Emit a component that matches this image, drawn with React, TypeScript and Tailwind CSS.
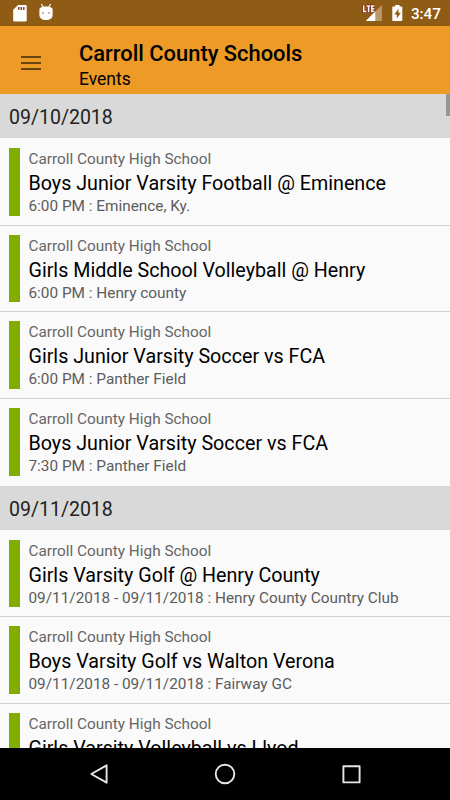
interface EventItem {
  title: string
  detail?: string
}

interface EventDay {
  date: string
  events: EventItem[]
}

const days: EventDay[] = [
  {
    date: '09/10/2018',
    events: [
      { title: 'Boys Junior Varsity Football @ Eminence', detail: '6:00 PM : Eminence, Ky.' },
      { title: 'Girls Middle School Volleyball @ Henry', detail: '6:00 PM : Henry county' },
      { title: 'Girls Junior Varsity Soccer vs FCA', detail: '6:00 PM : Panther Field' },
      { title: 'Boys Junior Varsity Soccer vs FCA', detail: '7:30 PM : Panther Field' },
    ],
  },
  {
    date: '09/11/2018',
    events: [
      { title: 'Girls Varsity Golf @ Henry County', detail: '09/11/2018 - 09/11/2018 : Henry County Country Club' },
      { title: 'Boys Varsity Golf vs Walton Verona', detail: '09/11/2018 - 09/11/2018 : Fairway GC' },
      { title: 'Girls Varsity Volleyball vs Llyod' },
    ],
  },
]

function StatusBar() {
  return (
    <div className="flex h-[26px] shrink-0 items-center justify-between bg-[#8f5c16] pr-[9px] pl-[13px]">
      <div className="flex items-center">
        {/* SD card */}
        <svg className="h-[26px] w-[15px]" viewBox="0 0 15 26">
          <path d="M5 5h7.5a1.2 1.2 0 0 1 1.2 1.2v14a1.2 1.2 0 0 1-1.2 1.2H1.4a1.2 1.2 0 0 1-1.2-1.2V9.8z" fill="#fff" />
          <path d="M5.8 7v3M8.3 7v3M10.8 7v3" stroke="#8a3a20" strokeWidth="1.4" />
        </svg>
        {/* Android head */}
        <svg className="ml-[11px] h-[26px] w-[14px]" viewBox="0 0 14 26">
          <path d="M2.4 4l2 3.4M11.6 4l-2 3.4" stroke="#fff" strokeWidth="1.1" />
          <path d="M.4 9.5C.4 7.4 3 6.4 7 6.4s6.6 1 6.6 3.1V15c0 3-2.6 5-6.6 5S.4 18 .4 15z" fill="#fff" />
          <circle cx="3.9" cy="13" r=".8" fill="#8f5c16" />
          <circle cx="10" cy="13" r=".8" fill="#8f5c16" />
        </svg>
      </div>
      <div className="flex items-center">
        {/* LTE signal */}
        <svg className="h-[26px] w-[21px]" viewBox="0 0 21 26">
          <path d="M20.8 5v16H4.8z" fill="#b99a6c" />
          <path d="M14.3 11.5V21H4.8z" fill="#fff" />
          <path d="M2.7 5.5v6h2.6M5.9 6h3.4M7.6 6v6M13.3 6h-2.5v5.500h2.500M10.800 8.700h2.300" fill="none" stroke="#7d2020" strokeWidth="2.8" />
          <path d="M2.7 5.5v6h2.6M5.9 6h3.4M7.6 6v6M13.3 6h-2.5v5.500h2.500M10.800 8.700h2.300" fill="none" stroke="#fff" strokeWidth="1.5" />
        </svg>
        {/* Charging battery */}
        <svg className="ml-[10px] h-[26px] w-[11px]" viewBox="0 0 11 26">
          <path d="M3.2 5h4.4v1.4h1.7c.6 0 1 .4 1 1V20c0 .6-.4 1-1 1H1.3c-.6 0-1-.4-1-1V7.4c0-.6.4-1 1-1h1.9z" fill="#fff" />
          <path d="M6.5 8.7L2.3 14.4h2.5v4.2l4.1-5.9H6.5z" fill="#8f5c16" />
        </svg>
        <span className="ml-[8px] pt-px text-[15.3px] leading-[26px] font-medium text-white">3:47</span>
      </div>
    </div>
  )
}

function AppBar() {
  return (
    <header className="flex h-[68px] shrink-0 bg-[#ed9b26]">
      <button type="button" aria-label="Menu" className="mt-[30px] ml-[20.5px] flex h-[14px] w-[20.5px] flex-col justify-between">
        <span className="h-[2px] w-full bg-[#684413]" />
        <span className="h-[2px] w-full bg-[#684413]" />
        <span className="h-[2px] w-full bg-[#684413]" />
      </button>
      <div className="ml-[38px] pt-[14px] text-black">
        <h1 className="text-[21.9px] leading-[27px] font-medium">Carroll County Schools</h1>
        <p className="text-[17.5px] leading-[25px]">Events</p>
      </div>
    </header>
  )
}

function EventRow({ title, detail }: EventItem) {
  return (
    <li className="flex h-[86.6px] border-b border-[#d2d2d2] pt-[9px] pl-[9px] last:border-b-0">
      <span className="h-[67.6px] w-[11px] shrink-0 bg-[#80ad00]" />
      <div className="ml-[8.5px] whitespace-nowrap">
        <p className="text-[15.35px] leading-[22px] text-[#666666]">Carroll County High School</p>
        <p className="text-[19.7px] leading-[27px] text-black">{title}</p>
        {detail && <p className="text-[15.35px] leading-[19px] text-[#5c5c5c]">{detail}</p>}
      </div>
    </li>
  )
}

function NavBar() {
  return (
    <nav className="flex h-[52px] shrink-0 items-center justify-center bg-black">
      <svg className="h-[52px] w-[300px]" viewBox="0 0 300 52" fill="none" stroke="#e6e6e6" strokeWidth="1.9" strokeLinejoin="round">
        <path d="M31.6 17.3v17.4L16.3 26z" />
        <circle cx="150" cy="26" r="9.3" />
        <rect x="268.4" y="18.2" width="16.2" height="16.2" />
      </svg>
    </nav>
  )
}

export default function App() {
  return (
    <div className="flex h-[800px] w-[450px] flex-col overflow-hidden bg-[#fafafa] font-['Roboto',sans-serif]">
      <StatusBar />
      <AppBar />
      <main className="relative min-h-0 flex-1 overflow-hidden">
        {days.map((day) => (
          <section key={day.date}>
            <h2 className="h-[44.3px] bg-[#d9d9d9] pl-[9px] text-[19.5px] leading-[47px] text-[#212121]">{day.date}</h2>
            <ul className="pt-[0.9px]">
              {day.events.map((event) => (
                <EventRow key={event.title} {...event} />
              ))}
            </ul>
          </section>
        ))}
        {/* Scroll thumb */}
        <span className="absolute top-0 right-0 h-[22px] w-[4px] bg-[#979797]" />
      </main>
      <NavBar />
    </div>
  )
}
